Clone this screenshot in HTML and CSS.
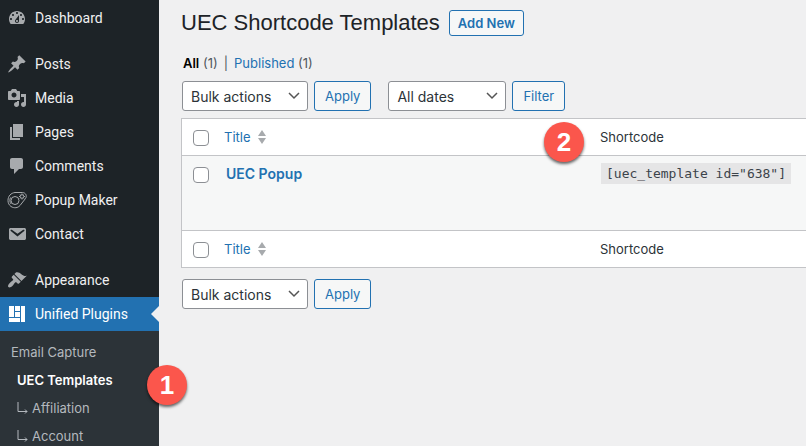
FILE: index.html
```html
<!DOCTYPE html>
<html lang="en">
<head>
    <meta charset="UTF-8">
    <meta name="viewport" content="width=device-width, initial-scale=1.0">
    <title>UEC Shortcode Templates</title>
    <link rel="stylesheet" href="styles.css">
</head>
<body>

    <nav class="admin-menu">
        <ul class="menu">
            <li>
                <a href="#"><svg class="icon" viewBox="0 0 20 20"><path d="M3.76 16h12.48c1.1-1.37 1.76-3.11 1.76-5 0-4.42-3.58-8-8-8s-8 3.58-8 8c0 1.89.66 3.63 1.76 5zM10 4c.55 0 1 .45 1 1s-.45 1-1 1-1-.45-1-1 .45-1 1-1zM6 6c.55 0 1 .45 1 1s-.45 1-1 1-1-.45-1-1 .45-1 1-1zm8 0c.55 0 1 .45 1 1s-.45 1-1 1-1-.45-1-1 .45-1 1-1zm-5.37 5.55L12 7v6c0 1.1-.9 2-2 2s-2-.9-2-2c0-.57.24-1.08.63-1.45zM4 10c.55 0 1 .45 1 1s-.45 1-1 1-1-.45-1-1 .45-1 1-1zm12 0c.55 0 1 .45 1 1s-.45 1-1 1-1-.45-1-1 .45-1 1-1zm-5 3c0-.55-.45-1-1-1s-1 .45-1 1 .45 1 1 1 1-.45 1-1z"/></svg>Dashboard</a>
            </li>
            <li class="group">
                <a href="#"><svg class="icon" viewBox="0 0 20 20"><path d="M10.44 3.02l1.82-1.82 6.36 6.35-1.83 1.82c-1.05-.68-2.48-.57-3.41.36l-.75.75c-.92.93-1.04 2.35-.35 3.41l-1.83 1.82-2.41-2.41-2.8 2.79c-.42.42-3.38 2.71-3.8 2.29s1.86-3.39 2.28-3.81l2.79-2.79L4.1 9.36l1.83-1.82c1.05.69 2.48.57 3.4-.36l.75-.75c.93-.92 1.05-2.35.36-3.41z"/></svg>Posts</a>
            </li>
            <li>
                <a href="#"><svg class="icon" viewBox="0 0 20 20"><path d="M13 11V4c0-.55-.45-1-1-1h-1.67L9 1H5L3.67 3H2c-.55 0-1 .45-1 1v7c0 .55.45 1 1 1h10c.55 0 1-.45 1-1zM7 4.5c1.38 0 2.5 1.12 2.5 2.5S8.38 9.5 7 9.5 4.5 8.38 4.5 7 5.62 4.5 7 4.5zM14 6h5v10.5c0 1.38-1.12 2.5-2.5 2.5S14 17.88 14 16.5s1.12-2.5 2.5-2.5c.17 0 .34.02.5.05V9h-3V6zm-4 8.05V13h2v3.5c0 1.38-1.12 2.5-2.5 2.5S7 17.88 7 16.5 8.12 14 9.5 14c.17 0 .34.02.5.05z"/></svg>Media</a>
            </li>
            <li>
                <a href="#"><svg class="icon" viewBox="0 0 20 20"><path d="M6 15V2h10v13H6zm-1 1h8v2H3V5h2v11z"/></svg>Pages</a>
            </li>
            <li>
                <a href="#"><svg class="icon" viewBox="0 0 20 20"><path d="M5 2h9c1.1 0 2 .9 2 2v7c0 1.1-.9 2-2 2h-2l-5 5v-5H5c-1.1 0-2-.9-2-2V4c0-1.1.9-2 2-2z"/></svg>Comments</a>
            </li>
            <li>
                <a href="#"><svg class="icon icon-line" viewBox="0 0 20 20"><path d="M1 10.500C1 6 4 3 8 2.500L15.500 2.500C19 2.800 20.200 6 18.500 8.500L13 15.500C11 18 7 18.500 4 16.500C2 15 1 13 1 10.500z"/><circle cx="8" cy="10.500" r="4"/><path d="M3.500 7.500c-1 2-.8 5 .7 6.500"/><circle cx="15" cy="6.500" r="1.800"/><path d="M15 3.500v1M15 8.500v1M12 6.500h1M17 6.500h1M13 4.500l.7.700M16.300 7.800l.7.700M17 4.500l-.7.700M13.700 7.800l-.7.700"/></svg>Popup Maker</a>
            </li>
            <li>
                <a href="#"><svg class="icon" viewBox="0 0 20 20"><path d="M3.87 4h13.25C18.37 4 19 4.59 19 5.79v8.42c0 1.19-.63 1.79-1.88 1.79H3.87c-1.25 0-1.88-.6-1.88-1.79V5.79c0-1.2.63-1.79 1.88-1.79zm6.62 8.6l6.74-5.53c.24-.2.43-.66.13-1.07-.29-.41-.82-.42-1.17-.17l-5.7 3.86L4.8 5.83c-.35-.25-.88-.24-1.17.17-.3.41-.11.87.13 1.07z"/></svg>Contact</a>
            </li>
            <li class="group">
                <a href="#"><svg class="icon" viewBox="0 0 20 20"><path d="M14.48 11.06L7.41 3.99l1.5-1.5c.5-.56 2.3-.47 3.51.32 1.21.8 1.43 1.28 2.91 2.1 1.18.64 2.45 1.26 4.45.85zm-.71.71L6.7 4.7 4.93 6.47c-.39.39-.39 1.02 0 1.41l1.06 1.06c.39.39.39 1.03 0 1.42-.6.6-1.43 1.11-2.21 1.69-.35.26-.7.53-1.01.84C1.43 14.23.4 16.08 1.4 17.07c.99 1 2.84-.03 4.18-1.36.31-.31.58-.66.85-1.02.57-.78 1.08-1.61 1.69-2.21.39-.39 1.02-.39 1.41 0l1.06 1.06c.39.39 1.02.39 1.41 0z"/></svg>Appearance</a>
            </li>
            <li>
                <a class="current" href="#"><svg class="icon" viewBox="0 0 20 20"><path d="M2 2h5v11H2V2zm6 0h5v5H8V2zm6 0h4v16h-4V2zM8 8h5v5H8V8zm-6 6h11v4H2v-4z"/></svg>Unified Plugins</a>
            </li>
        </ul>
        <ul class="submenu">
            <li><a href="#">Email Capture</a></li>
            <li class="child active"><a href="#">UEC Templates</a><span class="badge badge-menu">1</span></li>
            <li class="child"><a href="#"><svg class="branch" viewBox="0 0 12 12"><path d="M1 0v9.500h9M8 7.500l2 2l-2 2"/></svg>Affiliation</a></li>
            <li class="child"><a href="#"><svg class="branch" viewBox="0 0 12 12"><path d="M1 0v9.500h9M8 7.500l2 2l-2 2"/></svg>Account</a></li>
        </ul>
    </nav>

    <main class="content">
        <div class="page-title">
            <h1>UEC Shortcode Templates</h1>
            <button class="button add-new" type="button">Add New</button>
        </div>

        <ul class="views">
            <li><a class="current" href="#">All</a> (1)</li>
            <li class="divider">|</li>
            <li><a href="#">Published</a> (1)</li>
        </ul>

        <div class="tablenav">
            <select class="bulk" aria-label="Select bulk action">
                <option>Bulk actions</option>
            </select>
            <button class="button" type="button">Apply</button>
            <select class="dates" aria-label="Filter by date">
                <option>All dates</option>
            </select>
            <button class="button" type="button">Filter</button>
        </div>

        <table class="list-table">
            <thead>
                <tr>
                    <td class="check"><input type="checkbox" aria-label="Select all"></td>
                    <th class="title"><a href="#">Title<svg class="sort" viewBox="0 0 8 14"><path d="M0 6l4-6l4 6zM0 8h8l-4 6z"/></svg></a></th>
                    <th class="shortcode">Shortcode<span class="badge badge-table">2</span></th>
                </tr>
            </thead>
            <tbody>
                <tr>
                    <td class="check"><input type="checkbox" aria-label="Select UEC Popup"></td>
                    <td class="title"><a class="row-title" href="#">UEC Popup</a></td>
                    <td class="shortcode"><code>[uec_template id="638"]</code></td>
                </tr>
            </tbody>
            <tfoot>
                <tr>
                    <td class="check"><input type="checkbox" aria-label="Select all"></td>
                    <th class="title"><a href="#">Title<svg class="sort" viewBox="0 0 8 14"><path d="M0 6l4-6l4 6zM0 8h8l-4 6z"/></svg></a></th>
                    <th class="shortcode">Shortcode</th>
                </tr>
            </tfoot>
        </table>

        <div class="tablenav">
            <select class="bulk" aria-label="Select bulk action">
                <option>Bulk actions</option>
            </select>
            <button class="button" type="button">Apply</button>
        </div>
    </main>

</body>
</html>
```
FILE: styles.css
```css
* {
    box-sizing: border-box;
}
body {
    margin: 0;
    min-height: 100vh;
    display: flex;
    background: #f0f0f1;
    color: #2c3338;
    font-family: Inter, "Liberation Sans", sans-serif;
    font-size: 13px;
    overflow: hidden;
}
ul {
    list-style: none;
    margin: 0;
    padding: 0;
}
a {
    color: #2271b1;
    text-decoration: none;
}

/* Admin menu */
.admin-menu {
    display: flex;
    flex: none;
    flex-direction: column;
    width: 159px;
    background: #1d2327;
}
.menu {
    padding-top: 1px;
}
.menu .group {
    margin-top: 12px;
}
.menu a {
    display: flex;
    align-items: center;
    gap: 8px;
    height: 34px;
    padding-left: 7px;
    color: #f0f0f1;
    font-family: Roboto, "Liberation Sans", sans-serif;
    font-size: 14px;
}
.icon {
    width: 20px;
    height: 20px;
    fill: #a7aaad;
}
.icon-line {
    fill: none;
    stroke: #a7aaad;
}
.menu a.current {
    position: relative;
    background: #2271b1;
    color: #fff;
}
.menu a.current .icon {
    fill: #fff;
}
.menu a.current::after {
    content: "";
    position: absolute;
    right: 0;
    top: 9px;
    border: 8px solid transparent;
    border-right-color: #f0f0f1;
    border-left: 0;
}
.submenu {
    flex: 1;
    padding-top: 7px;
    background: #2c3338;
}
.submenu li {
    position: relative;
    padding-left: 11px;
}
.submenu .child {
    padding-left: 17px;
}
.submenu a {
    display: flex;
    align-items: center;
    height: 28px;
    color: #b4b9be;
}
.submenu .active a {
    color: #fff;
    font-weight: 600;
}
.branch {
    width: 12px;
    height: 12px;
    margin-right: 3px;
    fill: none;
    stroke: #b4b9be;
}

/* Numbered markers */
.badge {
    position: absolute;
    width: 40px;
    height: 40px;
    border-radius: 50%;
    background: #fb564c;
    box-shadow: 0 2px 3px rgba(0, 0, 0, 0.6);
    color: #fff;
    font-family: "Liberation Sans", sans-serif;
    font-size: 26px;
    font-weight: 700;
    line-height: 40px;
    text-align: center;
}
.badge-menu {
    top: -1px;
    right: -28px;
}
.badge-table {
    top: 3px;
    left: -48px;
}

/* Content */
.content {
    flex: 1;
    min-width: 0;
    padding: 8px 0 0 22px;
}
.page-title {
    display: flex;
    align-items: center;
    gap: 9px;
}
h1 {
    margin: 0;
    color: #1d2327;
    font-family: "Liberation Sans", sans-serif;
    font-size: 22px;
    font-weight: 400;
    line-height: 30px;
}
.button {
    height: 30px;
    padding: 0 10px;
    border: 1px solid #2271b1;
    border-radius: 3px;
    background: #f6f7f7;
    color: #2271b1;
    font-family: inherit;
    font-size: 13px;
}
.button.add-new {
    height: 26px;
    padding: 0 8px;
    font-weight: 600;
}
.views {
    display: flex;
    gap: 6px;
    padding: 15px 0 8px 2px;
    color: #50575e;
    line-height: 20px;
}
.views .current {
    color: #000;
    font-weight: 600;
}
.tablenav {
    display: flex;
    gap: 6px;
    padding-left: 1px;
}
select {
    height: 30px;
    padding: 0 24px 0 8px;
    appearance: none;
    border: 1px solid #8c8f94;
    border-radius: 3px;
    background: #fff url("data:image/svg+xml,%3Csvg xmlns='http://www.w3.org/2000/svg' viewBox='0 0 12 8'%3E%3Cpath d='M1 1l5 5l5-5' fill='none' stroke='%23555' stroke-width='1.500'/%3E%3C/svg%3E") no-repeat right 7px center / 12px 8px;
    color: #2c3338;
    font-family: inherit;
    font-size: 14px;
}
.bulk {
    width: 126px;
}
.dates {
    width: 118px;
    margin-left: 11px;
}

/* Templates table */
.list-table {
    width: 100%;
    margin: 7px 0 11px;
    table-layout: fixed;
    border-collapse: separate;
    border-spacing: 0;
    border: 1px solid #c3c4c7;
    border-right: 0;
    background: #fff;
}
.list-table th,
.list-table td {
    height: 36px;
    padding: 0 8px;
    font-weight: 400;
    text-align: left;
}
.list-table .check {
    width: 34px;
    padding: 2px 0 0 11px;
}
.list-table .title {
    width: 376px;
}
.list-table .shortcode {
    position: relative;
}
.list-table tbody td {
    height: 76px;
    padding-top: 9px;
    border: solid #c3c4c7;
    border-width: 1px 0;
    background: #f6f7f7;
    vertical-align: top;
}
.list-table tbody .check {
    padding-top: 11px;
}
.title a {
    display: flex;
    align-items: center;
    gap: 7px;
}
.title .row-title {
    padding-left: 2px;
    font-size: 14px;
    font-weight: 600;
}
.sort {
    width: 8px;
    height: 14px;
    fill: #a7aaad;
}
input[type="checkbox"] {
    display: block;
    width: 16px;
    height: 16px;
    margin: 0;
    appearance: none;
    border: 1px solid #8c8f94;
    border-radius: 4px;
    background: #fff;
}
code {
    margin: 0 1px;
    padding: 3px 5px;
    background: #e5e5e6;
    color: #3c434a;
    font-family: "DejaVu Sans Mono", monospace;
    font-size: 13px;
}
```
